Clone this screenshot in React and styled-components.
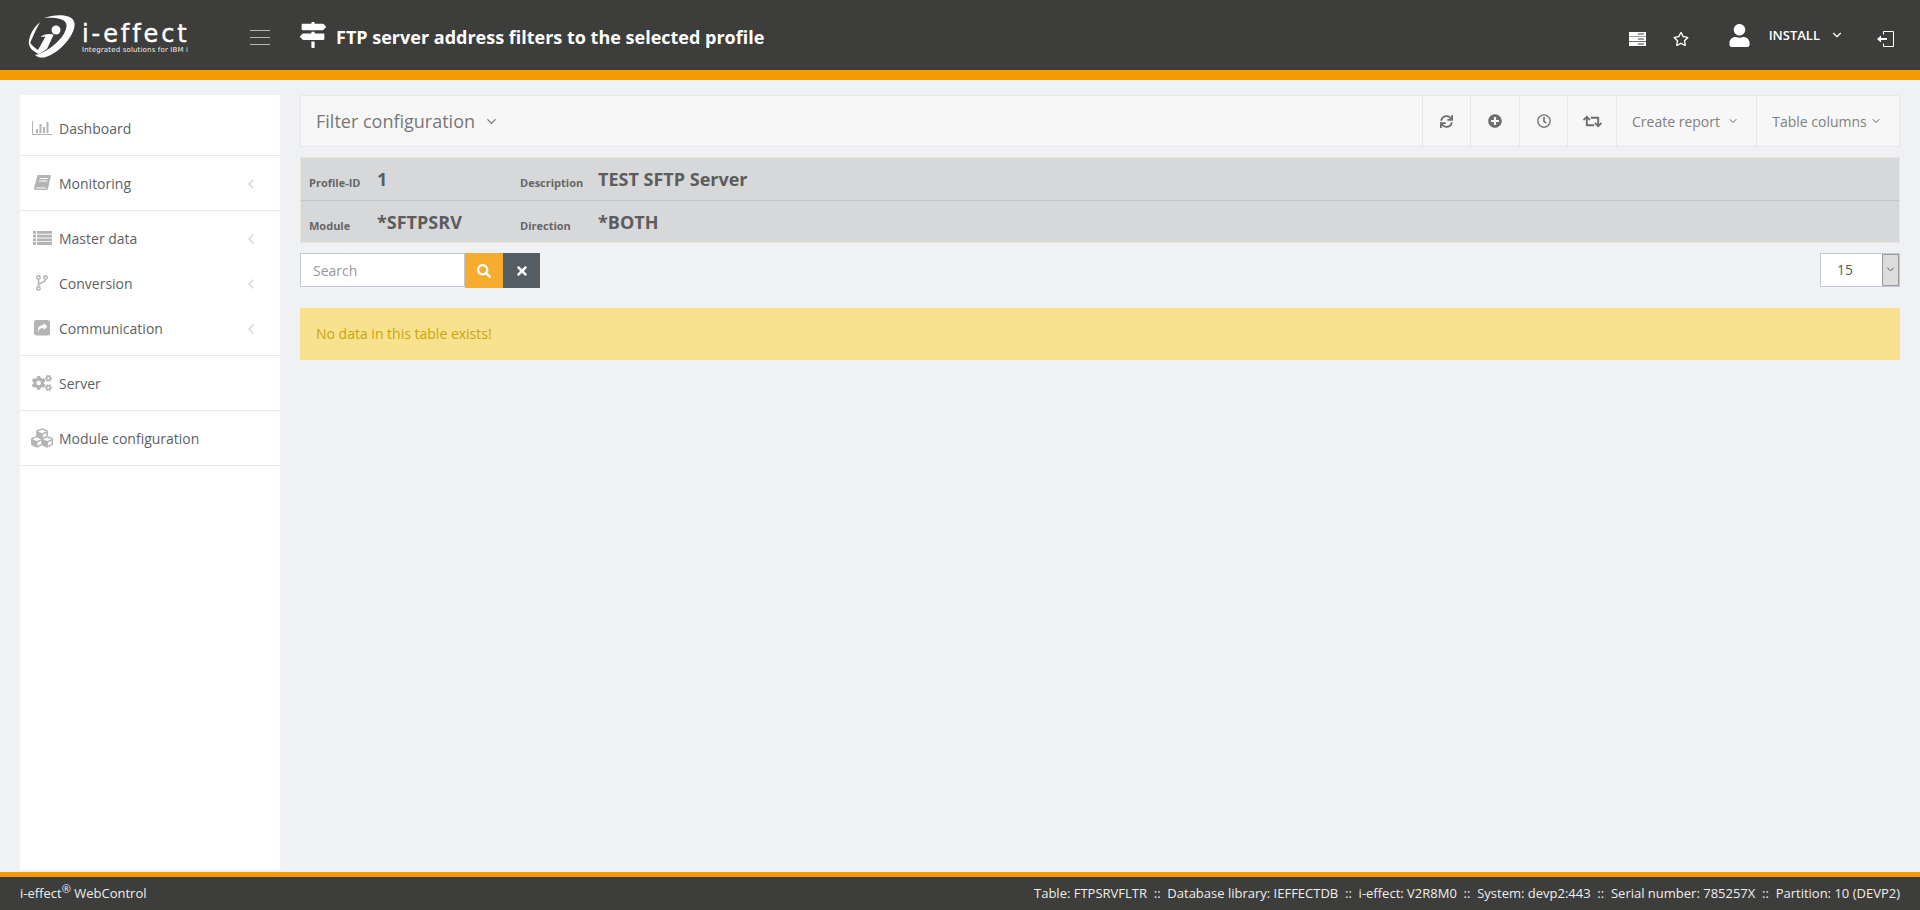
import React from "react";
import styled, { createGlobalStyle } from "styled-components";
import {
  FaMapSigns, FaCogs, FaCubes, FaSync,
  FaPlusCircle, FaRegClock, FaRetweet, FaSearch, FaTimes, FaRegStar, FaUser,
} from "react-icons/fa";
import { LuChevronDown, LuChevronLeft } from "react-icons/lu";

const Global = createGlobalStyle`
  html, body { margin: 0; padding: 0; background: #eff1f5; }
  body { font-family: "Open Sans", "Liberation Sans", sans-serif; }
  * { box-sizing: border-box; }
`;

const Page = styled.div`display:flex;flex-direction:column;height:910px;overflow:hidden;`;
const Header = styled.header`height:80px;flex:none;background:#3d3d3b;border-bottom:10px solid #f59b00;display:flex;align-items:center;color:#fff;`;
const Logo = styled.div`width:250px;height:70px;flex:none;padding:15px 0 0 27px;display:flex;gap:7px;`;
const LogoText = styled.div`display:flex;flex-direction:column;font-family:"DejaVu Sans","Liberation Sans",sans-serif;color:#fff;`;
const LogoName = styled.span`font-size:24px;line-height:24px;font-weight:400;margin-top:7px;letter-spacing:2.9px;white-space:nowrap;-webkit-text-stroke:.4px #fff;`;
const LogoTag = styled.span`font-size:7px;line-height:8px;white-space:nowrap;letter-spacing:.16px;color:#eee;`;
const Burger = styled.div`width:20px;height:15px;margin:4px 30px 0 0;display:flex;flex-direction:column;justify-content:space-between;`;
const BurgerLine = styled.i`display:block;height:1px;background:#b5b5b3;`;
const TitleIcon = styled.span`display:flex;font-size:26px;margin-right:10px;`;
const Title = styled.h1`font-size:18px;font-weight:700;margin:4px 0 0;line-height:24px;`;
const HeaderRight = styled.div`margin-left:auto;display:flex;align-items:center;height:70px;padding-top:8px;`;
const HeadIcon = styled.span`display:flex;font-size:${p => p.$size || 16}px;margin-right:${p => p.$mr || 0}px;margin-top:${p => p.$mt || 0}px;margin-left:${p => p.$ml || 0}px;`;
const UserName = styled.span`font-size:13px;font-weight:600;margin:-9px 10px 0 0;`;

const Body = styled.div`flex:1;display:flex;min-height:0;padding:15px 20px 2px;gap:20px;`;
const Sidebar = styled.nav`width:260px;flex:none;background:#fff;`;
const Group = styled.div`border-bottom:1px solid #e9e9ea;padding:${p => p.$first ? "11px 0 4px" : "5px 0 4px"};`;
const Item = styled.div`height:45px;display:flex;align-items:center;color:#5c5f66;font-size:14px;position:relative;padding-left:9px;`;
const ItemIcon = styled.span`width:26px;margin-right:4px;margin-top:-2px;display:flex;justify-content:center;color:#b4b4b4;font-size:${p => p.$size || 16}px;`;
const Arrow = styled.span`position:absolute;right:21px;top:15px;display:flex;color:#d4d4d4;font-size:16px;`;

const Main = styled.main`flex:1;min-width:0;display:flex;flex-direction:column;`;
const Toolbar = styled.div`height:52px;background:#f7f7f7;border:1px solid #e8e8e8;display:flex;align-items:stretch;`;
const ToolTitle = styled.div`flex:1;display:flex;align-items:center;padding-left:15px;color:#777;font-size:18px;gap:9px;`;
const ToolBtn = styled.div`width:${p => p.$w}px;flex:none;border-left:1px solid #e8e8e8;display:flex;align-items:center;justify-content:center;color:#6e6e6e;font-size:${p => p.$size || 15}px;`;
const ToolText = styled(ToolBtn)`color:#808080;font-size:14px;gap:${p => p.$gap || 6}px;padding-right:2px;`;
const ToolChevron = styled(LuChevronDown)`color:#666;`;
const Info = styled.div`margin-top:10px;background:#d7d8da;border:1px solid #e8e8da;`;
const InfoRow = styled.div`height:${p => p.$h}px;display:grid;grid-template-columns:68px 143px 78px 1fr;padding-left:8px;align-items:center;border-bottom:${p => p.$line ? "1px solid #c3c5c7" : "0"};`;
const InfoLabel = styled.span`font-size:11px;font-weight:700;color:#666;padding-top:${p => p.$low ? 7 : 6}px;`;
const InfoValue = styled.span`font-size:18px;font-weight:700;color:#5c5c5c;line-height:24px;`;
const Controls = styled.div`margin-top:10px;display:flex;justify-content:space-between;align-items:flex-start;`;
const SearchWrap = styled.div`display:flex;`;
const SearchInput = styled.div`width:165px;height:34px;background:#fff;border:1px solid #c2cad8;color:#999;font-size:14px;display:flex;align-items:center;padding-left:12px;`;
const SBtn = styled.div`height:35px;width:${p => p.$w}px;background:${p => p.$bg};color:#fff;font-size:14px;display:flex;align-items:center;justify-content:center;`;
const Select = styled.div`width:80px;height:34px;background:#fff;border:1px solid #c2cad8;display:flex;justify-content:space-between;color:#5c5c5c;font-size:14px;`;
const SelectValue = styled.span`padding:6px 0 0 16px;`;
const SelectArrow = styled.span`width:17px;height:32px;background:#dcdcdc;border:1px solid #9a9a9a;display:flex;justify-content:center;padding-top:9px;font-size:11px;color:#444;`;
const Alert = styled.div`margin-top:20px;height:52px;background:#f9e28e;color:#c8a50f;font-size:14px;display:flex;align-items:center;padding:0 0 1px 16px;`;

const Footer = styled.footer`height:38px;flex:none;background:#3d3d3b;border-top:5px solid #f59b00;color:#eee;font-size:13px;display:flex;align-items:center;justify-content:space-between;padding:0 20px 2px;`;
const Sup = styled.sup`font-size:11px;line-height:0;`;
const FootRight = styled.span`white-space:pre;`;

const LogoMark = () => (
  <svg width="48" height="43" viewBox="0 0 48 43" fill="#fff">
    <path d="M17 3C27-1 46-2 47.500 8 49 20 32 38 19 42c-5 1.500-9 0-11-2C20 38 40 22 39.500 10 39 4 30 2 17 3z" />
    <path d="M13 7C6 13 1 22 2 30c1.500-2 4-10 11-23z" />
    <path d="M2 26c2 4 6 7 9 9l7.500-13.500-5 .5c3-3 10-4 13-2L20 34l-8 5C7 37 1 33 2 26z" />
    <circle cx="29" cy="15" r="4.500" />
  </svg>
);
const ServerIcon = () => (
  <svg width="17" height="14" viewBox="0 0 17 14" fill="#fff">
    <path d="M0 0h17v4.300H0zM0 4.800h17v4.300H0zM0 9.700h17V14H0z" />
    <path fill="#3d3d3b" d="M9 1.500h6v1H9zM9 6.500h6v1H9zM9 11.500h6v1H9z" />
  </svg>
);
const LogoutIcon = () => (
  <svg width="17" height="16" viewBox="0 0 17 16" fill="none" stroke="#fff">
    <path d="M6.500 3.500V.5h10v15h-10v-3" strokeWidth="1" />
    <path d="M0 8l4-3.500V7h6v2H4v2.500z" fill="#fff" stroke="none" />
  </svg>
);
const ChartIcon = () => (
  <svg width="20" height="14" viewBox="0 0 20 14" fill="#b4b4b4">
    <path d="M0 0h1v13h19v1H0z" />
    <path d="M4 8h2v4H4zM7.500 3h2v9h-2zM11 6h2v6h-2zM14.500 1h2v11h-2z" />
  </svg>
);
const BookIcon = () => (
  <svg width="17" height="15" viewBox="0 0 17 15" fill="#b4b4b4">
    <path d="M3.500 0H16c.8 0 1 .5.8 1.300L14 13.500c-.2.800-.8 1.500-2 1.500H2C.5 15-.3 13.800.2 12.300z" />
    <path fill="#fff" d="M6 3h8l-.3 1H5.700zM5.300 5.500h8l-.3 1H5zM2.700 12.500h9.500l-.3 1H2.500c-.6 0-.6-1 .2-1z" />
  </svg>
);
const ListIcon = () => (
  <svg width="19" height="14" viewBox="0 0 19 14" fill="#b4b4b4">
    <path d="M0 0h3v2.800H0zM4 0h15v2.800H4zM0 3.700h3v2.800H0zM4 3.700h15v2.800H4zM0 7.400h3v2.800H0zM4 7.400h15v2.800H4zM0 11.100h3v2.800H0zM4 11.100h15v2.800H4z" />
  </svg>
);
const ForkIcon = () => (
  <svg width="12" height="16" viewBox="0 0 12 16" fill="none" stroke="#b4b4b4" strokeWidth="1.500">
    <circle cx="2.500" cy="2.500" r="1.700" />
    <circle cx="9.500" cy="2.500" r="1.700" />
    <circle cx="2.500" cy="13.500" r="1.700" />
    <path d="M2.500 4.500v7M9.500 4.500c0 3.500-7 3-7 6" />
  </svg>
);
const ShareIcon = () => (
  <svg width="16" height="16" viewBox="0 0 16 16">
    <rect width="16" height="15.500" rx="2.500" fill="#b4b4b4" />
    <path fill="#fff" d="M9.500 3l4 3.500-4 3.500V8C7 8 5 8.700 4.200 12 3 8 5.500 5 9.500 5z" />
  </svg>
);

const menu = [
  { first: true, items: [{ t: "Dashboard", i: <ChartIcon /> }] },
  { items: [{ t: "Monitoring", i: <BookIcon />, a: 1 }] },
  { items: [{ t: "Master data", i: <ListIcon />, a: 1 }, { t: "Conversion", i: <ForkIcon />, a: 1 }, { t: "Communication", i: <ShareIcon />, a: 1 }] },
  { items: [{ t: "Server", i: <FaCogs />, s: 20 }] },
  { items: [{ t: "Module configuration", i: <FaCubes />, s: 22 }] },
];

export default function App() {
  return (
    <Page>
      <Global />
      <Header>
        <Logo>
          <LogoMark />
          <LogoText>
            <LogoName>i-effect</LogoName>
            <LogoTag>Integrated solutions for IBM i</LogoTag>
          </LogoText>
        </Logo>
        <Burger><BurgerLine /><BurgerLine /><BurgerLine /></Burger>
        <TitleIcon><FaMapSigns /></TitleIcon>
        <Title>FTP server address filters to the selected profile</Title>
        <HeaderRight>
          <HeadIcon $mr={27}><ServerIcon /></HeadIcon>
          <HeadIcon $size={16} $mr={39}><FaRegStar /></HeadIcon>
          <HeadIcon $size={23} $mr={18} $mt={-7}><FaUser /></HeadIcon>
          <UserName>INSTALL</UserName>
          <HeadIcon $size={14} $mr={33} $mt={-9}><LuChevronDown /></HeadIcon>
          <HeadIcon $mr={26}><LogoutIcon /></HeadIcon>
        </HeaderRight>
      </Header>
      <Body>
        <Sidebar>
          {menu.map((g, n) => (
            <Group key={n} $first={g.first}>
              {g.items.map(it => (
                <Item key={it.t}>
                  <ItemIcon $size={it.s}>{it.i}</ItemIcon>
                  {it.t}
                  {it.a && <Arrow><LuChevronLeft /></Arrow>}
                </Item>
              ))}
            </Group>
          ))}
        </Sidebar>
        <Main>
          <Toolbar>
            <ToolTitle>Filter configuration <LuChevronDown size={15} /></ToolTitle>
            <ToolBtn $w={48}><FaSync size={13} /></ToolBtn>
            <ToolBtn $w={49}><FaPlusCircle size={14} /></ToolBtn>
            <ToolBtn $w={48}><FaRegClock size={14} /></ToolBtn>
            <ToolBtn $w={49}><FaRetweet size={19} /></ToolBtn>
            <ToolText $w={140} $gap={7}>Create report <ToolChevron size={12} /></ToolText>
            <ToolText $w={143} $gap={3}>Table columns <ToolChevron size={12} /></ToolText>
          </Toolbar>
          <Info>
            <InfoRow $h={43} $line>
              <InfoLabel>Profile-ID</InfoLabel><InfoValue>1</InfoValue>
              <InfoLabel>Description</InfoLabel><InfoValue>TEST SFTP Server</InfoValue>
            </InfoRow>
            <InfoRow $h={41}>
              <InfoLabel $low>Module</InfoLabel><InfoValue>*SFTPSRV</InfoValue>
              <InfoLabel $low>Direction</InfoLabel><InfoValue>*BOTH</InfoValue>
            </InfoRow>
          </Info>
          <Controls>
            <SearchWrap>
              <SearchInput>Search</SearchInput>
              <SBtn $w={38} $bg="#f6ac2f"><FaSearch size={14} /></SBtn>
              <SBtn $w={37} $bg="#545e64"><FaTimes size={14} /></SBtn>
            </SearchWrap>
            <Select>
              <SelectValue>15</SelectValue>
              <SelectArrow><LuChevronDown /></SelectArrow>
            </Select>
          </Controls>
          <Alert>No data in this table exists!</Alert>
        </Main>
      </Body>
      <Footer>
        <span>i-effect<Sup>®</Sup> WebControl</span>
        <FootRight>Table: FTPSRVFLTR  ::  Database library: IEFFECTDB  ::  i-effect: V2R8M0  ::  System: devp2:443  ::  Serial number: 785257X  ::  Partition: 10 (DEVP2)</FootRight>
      </Footer>
    </Page>
  );
}
